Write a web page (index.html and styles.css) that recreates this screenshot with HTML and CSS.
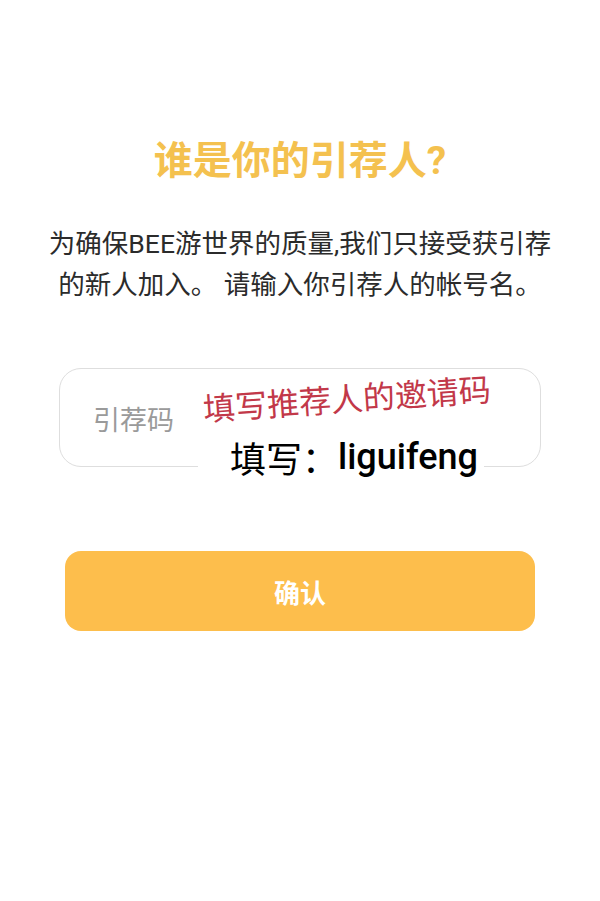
FILE: index.html
```html
<!DOCTYPE html>
<html lang="zh-CN">
<head>
<meta charset="utf-8">
<title>谁是你的引荐人?</title>
<link rel="stylesheet" href="styles.css">
</head>
<body>
<main class="page">
  <h1 class="title">谁是你的引荐人?</h1>
  <p class="desc">为确保BEE游世界的质量,我们只接受获引荐<br>的新人加入。 请输入你引荐人的帐号名。</p>
  <div class="field">
    <input class="field-input" type="text" placeholder="引荐码">
    <span class="note-box">填写：<span class="note-name">liguifeng</span></span>
    <span class="note-red">填写推荐人的邀请码</span>
  </div>
  <button class="confirm" type="button">确认</button>
</main>
</body>
</html>
```
FILE: styles.css
```css
* { box-sizing: border-box; }
html, body { margin: 0; padding: 0; background: #fff; }
body {
  font-family: Roboto, "Noto Sans CJK SC", sans-serif;
  color: #2b2b2b;
}
.page {
  width: 600px;
  padding-top: 137px;
  display: flex;
  flex-direction: column;
  align-items: center;
}
.title {
  margin: 0;
  font-size: 39px;
  line-height: 48px;
  font-weight: 700;
  color: #f4c14f;
  text-align: center;
}
.desc {
  margin: 38px 0 0;
  font-size: 26.5px;
  line-height: 41px;
  text-align: center;
  color: #2b2b2b;
  white-space: nowrap;
}
.field {
  position: relative;
  margin-top: 63px;
  width: 482px;
  height: 99px;
  border: 1.5px solid #dedede;
  border-radius: 22px;
  display: flex;
  align-items: center;
  padding: 6px 0 0 33px;
}
.field-input {
  border: 0;
  outline: 0;
  background: transparent;
  font-family: inherit;
  font-size: 27px;
  color: #333;
  width: 100%;
  padding: 0;
}
.field-input::placeholder { color: #9a9a9a; }
.note-box {
  position: absolute;
  left: 138px;
  top: 55px;
  width: 286px;
  height: 66px;
  background: #fff;
  display: flex;
  align-items: center;
  padding-left: 32px;
  font-size: 36px;
  font-weight: 400;
  color: #000;
  white-space: nowrap;
}
.note-name { font-weight: 500; }
.note-red {
  position: absolute;
  left: 143px;
  top: 12px;
  font-size: 32px;
  line-height: 38px;
  color: #c23849;
  white-space: nowrap;
  transform: rotate(-4deg);
}
.confirm {
  margin-top: 84px;
  width: 470px;
  height: 80px;
  border: 0;
  border-radius: 16px;
  background: #fdbe4c;
  color: #fff;
  font-family: inherit;
  font-size: 26px;
  font-weight: 700;
  padding: 0;
}
```
